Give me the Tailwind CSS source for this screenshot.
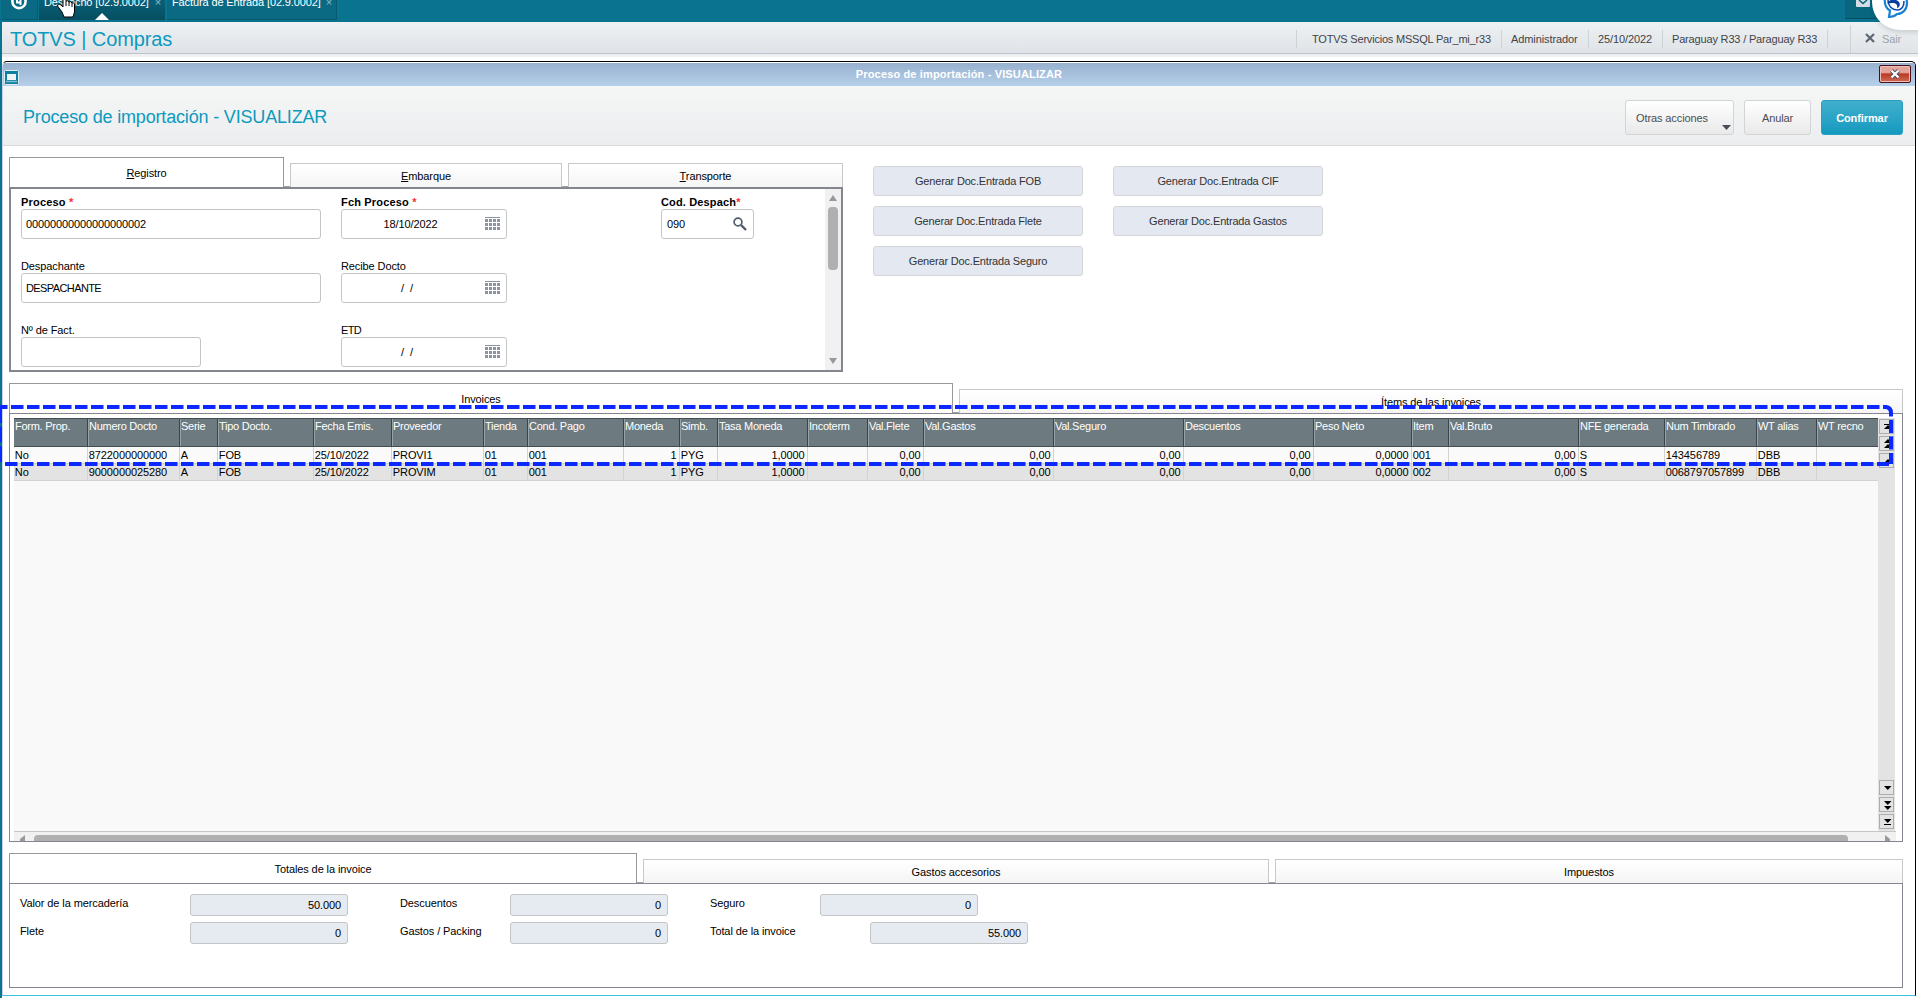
<!DOCTYPE html>
<html lang="es">
  <head>
    <meta charset="UTF-8" />
    <meta name="viewport" content="width=device-width, initial-scale=1.0" />
    <title>TOTVS | Compras</title>
    <script src="https://cdn.jsdelivr.net/npm/@tailwindcss/browser@4"></script>
  </head>

  <body
    class="relative w-[1918px] h-[998px] overflow-hidden bg-white text-black text-[11px] leading-[15px] tracking-[-0.1px] font-['Liberation_Sans',Arial,sans-serif]"
  >
    <!-- Top bar with open routines -->
    <div class="h-[22px] bg-[#0a7390] flex items-start overflow-hidden">
      <div
        class="ml-px w-[37px] h-5 bg-[#0a6a84] border-b border-r border-[#075a70] flex justify-center"
      >
        <svg class="-mt-[7px]" width="18" height="18" viewBox="0 0 18 18" fill="none">
          <circle cx="9" cy="8.500" r="6.600" stroke="#fff" stroke-width="2.600" />
          <path d="M7 4v5.500h4.500M10.500 7v5" stroke="#fff" stroke-width="2" />
        </svg>
      </div>
      <div
        class="relative ml-px w-[126px] h-5 bg-linear-to-b from-[#086078] to-[#074e60] text-white pl-[5px]"
      >
        <div class="-mt-[5px] flex tracking-[-0.15px]">
          <span>Despacho [02.9.0002]</span>
          <span class="ml-[6px] text-[#8fc0cd]">×</span>
        </div>
        <svg class="absolute left-[56px] bottom-0" width="14" height="7">
          <path d="M0 7L7 0l7 7z" fill="#fff" />
        </svg>
      </div>
      <div
        class="ml-0.5 w-[170px] h-5 bg-[#0a6a84] border-b border-r border-[#075a70] text-white pl-[5px]"
      >
        <div class="-mt-[5px] flex tracking-[-0.12px]">
          <span>Factura de Entrada [02.9.0002]</span>
          <span class="ml-[5px] text-[#8fc0cd]">×</span>
        </div>
      </div>
      <div
        class="ml-auto w-[73px] h-[19px] bg-[#08677f] border-b border-[#064e62] pl-[11px]"
      >
        <svg width="14" height="8" viewBox="0 0 14 8">
          <path d="M0 0h14v6q0 1-1 1H1q-1 0-1-1z" fill="#d5dde4" />
          <path d="M3 0l4 3.500L11 0" fill="none" stroke="#07617a" stroke-width="1.500" />
        </svg>
      </div>
    </div>

    <div class="h-[976px] border-l-2 border-[#0a7390] flex flex-col">
      <!-- Application header -->
      <header
        class="h-[32px] shrink-0 border-b border-[#bcc4cb] bg-linear-to-b from-[#eff1f3] to-[#dfe3e7] flex items-center pl-2 text-[#3f4448]"
      >
        <h1
          class="text-[20px] leading-[24px] text-[#0c9abe] pt-[3px]"
        >
          TOTVS | Compras
        </h1>
        <div class="ml-auto h-[31px] flex items-center whitespace-nowrap pt-[3px]">
          <span
            class="w-[205px] h-[18px] leading-[18px] border-l border-[#cdd2d5] pl-[15px] tracking-[-0.2px]"
            >TOTVS Servicios MSSQL Par_mi_r33</span
          >
          <span
            class="w-[87px] h-[18px] leading-[18px] border-l border-[#cdd2d5] pl-[9px]"
            >Administrador</span
          >
          <span
            class="w-[74px] h-[18px] leading-[18px] border-l border-[#cdd2d5] pl-[9px]"
            >25/10/2022</span
          >
          <span
            class="w-[165px] h-[18px] leading-[18px] border-l border-[#cdd2d5] pl-[9px] tracking-[-0.17px]"
            >Paraguay R33 / Paraguay R33</span
          >
          <span class="w-[23px] h-[18px] border-l border-[#cdd2d5]"></span>
          <span
            class="w-[68px] h-[28px] border-l border-[#cdd2d5] flex items-center pl-[14px] text-[#9aa2a8]"
          >
            <svg width="10" height="10" viewBox="0 0 10 10" class="mr-[7px] -mt-0.5">
              <path d="M1 1l8 8M9 1L1 9" stroke="#5b6774" stroke-width="2.200" />
            </svg>
            Sair
          </span>
        </div>
      </header>
      <div class="h-[3px] shrink-0 bg-[#eef0f1]"></div>

      <!-- Dialog window -->
      <div
        class="mt-1 w-[1914px] h-[935px] shrink-0 border-t border-r border-b border-l rounded-t-[5px] border-t-black border-r-black border-b-[#3cc3d8] border-l-[#c8d2e6] overflow-hidden bg-white"
      >
        <div
          class="relative mt-px h-[23px] bg-linear-to-b from-[#98b1cf] to-[#b6d0ea] flex justify-center"
        >
          <span
            class="font-bold text-white leading-[22px] tracking-[0.15px]"
            >Proceso de importación - VISUALIZAR</span
          >
          <svg class="absolute left-px top-[7px]" width="15" height="15" viewBox="0 0 15 15">
            <rect x=".5" y=".5" width="14" height="14" rx="1" fill="#0d7fa3" stroke="#e4eef6" />
            <path d="M3 4h9v6H3z" fill="#eef3f6" />
            <path d="M2 11.500h11" stroke="#7fc0d3" stroke-width="1.500" />
          </svg>
          <div
            class="absolute right-[4px] top-[2px] w-8 h-[18px] rounded-[2px] border border-[#4a1018] bg-linear-to-b from-[#e3a49c] from-40% via-[#b9391f] via-50% to-[#cf6a55] shadow-[inset_0_0_0_1px_#ecc0b8] flex items-center justify-center"
          >
            <svg width="12" height="10" viewBox="0 0 12 10">
              <path d="M2.500 1.500l7 7M9.500 1.500l-7 7" stroke="#4d4f5e" stroke-width="4" />
              <path d="M2.500 1.500l7 7M9.500 1.500l-7 7" stroke="#fff" stroke-width="2.200" />
            </svg>
          </div>
        </div>

        <div
          class="h-[60px] border-b border-[#d8dadc] bg-linear-to-b from-[#f5f7f6] to-[#ecedef] flex items-center pl-[20px] pr-[12px] text-[#4a4d52]"
        >
          <h2
            class="text-[18px] leading-[22px] tracking-[-0.17px] text-[#0c9abe] pt-[3px]"
          >
            Proceso de importación - VISUALIZAR
          </h2>
          <div class="ml-auto flex items-center gap-[10px] pt-[3px]">
            <button
              class="relative w-[109px] h-[35px] rounded-[3px] border border-[#d3d4d6] bg-linear-to-b from-white to-[#e9e9ea] text-left pl-[10px] leading-[35px]"
            >
              Otras acciones
              <svg class="absolute right-[2px] bottom-[4px]" width="9" height="5">
                <path d="M0 0h9L4.500 5z" fill="#4a4d55" />
              </svg>
            </button>
            <button
              class="w-[67px] h-[35px] rounded-[3px] border border-[#d3d4d6] bg-linear-to-b from-white to-[#e9e9ea] leading-[35px]"
            >
              Anular
            </button>
            <button
              class="w-[82px] h-[35px] rounded-[3px] border border-[#2a9fc0] bg-linear-to-b from-[#3fafcd] to-[#0f9abf] text-white font-bold leading-[35px]"
            >
              Confirmar
            </button>
          </div>
        </div>

        <main class="pl-1.5 pt-[11px] w-[1900px]">
          <div class="flex">
            <!-- Process form -->
            <section class="w-[834px]">
              <div
                class="h-[30px] flex items-end gap-[6px] border-b border-[#a0a2a8]"
              >
                <div
                  class="w-[275px] h-[30px] -mb-px border border-b-0 border-[#989898] bg-white text-center leading-[30px]"
                >
                  <u>R</u>egistro
                </div>
                <div
                  class="w-[272px] h-[24px] -mb-px border border-b-0 border-[#c8c8c8] bg-linear-to-b from-white to-[#f5f5f5] text-center leading-[25px]"
                >
                  <u>E</u>mbarque
                </div>
                <div
                  class="w-[275px] h-[24px] -mb-px border border-b-0 border-[#c8c8c8] bg-linear-to-b from-white to-[#f5f5f5] text-center leading-[25px]"
                >
                  <u>T</u>ransporte
                </div>
              </div>
              <div class="h-[185px] border-2 border-[#83858f] flex">
                <div
                  class="grow grid grid-cols-[320px_320px_1fr] auto-rows-[64px] pl-[10px] pt-[5px]"
                >
                  <div>
                    <div class="font-bold leading-[17px] -mb-0.5 tracking-[0.18px]">
                      Proceso <span class="text-red-500">*</span>
                    </div>
                    <div
                      class="w-[300px] h-[30px] rounded-[3px] border border-[#c3c4c6] px-1 leading-[28px] tracking-[-0.12px]"
                    >
                      00000000000000000002
                    </div>
                  </div>
                  <div>
                    <div class="font-bold leading-[17px] -mb-0.5 tracking-[0.18px]">
                      Fch Proceso <span class="text-red-500">*</span>
                    </div>
                    <div
                      class="w-[166px] h-[30px] rounded-[3px] border border-[#c3c4c6] flex items-center pr-[6px]"
                    >
                      <span class="w-[137px] text-center">18/10/2022</span>
                      <svg class="ml-auto" width="15" height="14" fill="#8e93a3">
                        <path
                          d="M0 0h15v1H0zM0 2h3v3H0zM4 2h3v3H4zM8 2h3v3H8zM12 2h3v3h-3zM0 6h3v3H0zM4 6h3v3H4zM8 6h3v3H8zM12 6h3v3h-3zM0 10h3v3H0zM4 10h3v3H4zM8 10h3v3H8zM12 10h3v3h-3z"
                        />
                      </svg>
                    </div>
                  </div>
                  <div>
                    <div class="font-bold leading-[17px] -mb-0.5 tracking-[0.15px]">
                      Cod. Despach<span class="text-red-500">*</span>
                    </div>
                    <div
                      class="w-[93px] h-[30px] rounded-[3px] border border-[#c3c4c6] flex items-center pl-[5px] pr-[6px]"
                    >
                      090
                      <svg class="ml-auto -mt-px" width="14" height="14" viewBox="0 0 14 14" fill="none">
                        <circle cx="5" cy="5" r="3.900" stroke="#515c6e" stroke-width="1.700" />
                        <path d="M8 8l5 5" stroke="#515c6e" stroke-width="2.400" />
                      </svg>
                    </div>
                  </div>
                  <div>
                    <div class="leading-[17px] -mb-0.5">Despachante</div>
                    <div
                      class="w-[300px] h-[30px] rounded-[3px] border border-[#c3c4c6] px-1 leading-[28px] tracking-[-0.6px]"
                    >
                      DESPACHANTE
                    </div>
                  </div>
                  <div>
                    <div class="leading-[17px] -mb-0.5">Recibe Docto</div>
                    <div
                      class="w-[166px] h-[30px] rounded-[3px] border border-[#c3c4c6] flex items-center pr-[6px]"
                    >
                      <span class="w-[130px] text-center whitespace-pre">/  /</span>
                      <svg class="ml-auto" width="15" height="14" fill="#8e93a3">
                        <path
                          d="M0 0h15v1H0zM0 2h3v3H0zM4 2h3v3H4zM8 2h3v3H8zM12 2h3v3h-3zM0 6h3v3H0zM4 6h3v3H4zM8 6h3v3H8zM12 6h3v3h-3zM0 10h3v3H0zM4 10h3v3H4zM8 10h3v3H8zM12 10h3v3h-3z"
                        />
                      </svg>
                    </div>
                  </div>
                  <div></div>
                  <div>
                    <div class="leading-[17px] -mb-0.5">Nº de Fact.</div>
                    <div
                      class="w-[180px] h-[30px] rounded-[3px] border border-[#c3c4c6]"
                    ></div>
                  </div>
                  <div>
                    <div class="leading-[17px] -mb-0.5 tracking-[-0.7px]">ETD</div>
                    <div
                      class="w-[166px] h-[30px] rounded-[3px] border border-[#c3c4c6] flex items-center pr-[6px]"
                    >
                      <span class="w-[130px] text-center whitespace-pre">/  /</span>
                      <svg class="ml-auto" width="15" height="14" fill="#8e93a3">
                        <path
                          d="M0 0h15v1H0zM0 2h3v3H0zM4 2h3v3H4zM8 2h3v3H8zM12 2h3v3h-3zM0 6h3v3H0zM4 6h3v3H4zM8 6h3v3H8zM12 6h3v3h-3zM0 10h3v3H0zM4 10h3v3H4zM8 10h3v3H8zM12 10h3v3h-3z"
                        />
                      </svg>
                    </div>
                  </div>
                </div>
                <div
                  class="w-4 bg-[#f1f1f1] flex flex-col items-center pt-[6px] pb-[6px]"
                >
                  <svg width="8" height="6"><path d="M4 0l4 6H0z" fill="#989898" /></svg>
                  <div class="mt-[6px] w-[10px] h-[63px] rounded-[4px] bg-[#b0b0b0]"></div>
                  <svg class="mt-auto" width="8" height="6"><path d="M0 0h8L4 6z" fill="#989898" /></svg>
                </div>
              </div>
            </section>

            <!-- Document generation -->
            <section
              class="ml-[30px] mt-[9px] grid grid-cols-[210px_210px] auto-rows-[30px] gap-x-[30px] gap-y-[10px] content-start text-[#333] tracking-[-0.18px]"
            >
              <button class="rounded-[3px] border border-[#d4d5d8] bg-[#e4e8f1]">
                Generar Doc.Entrada FOB
              </button>
              <button class="rounded-[3px] border border-[#d4d5d8] bg-[#e4e8f1]">
                Generar Doc.Entrada CIF
              </button>
              <button class="rounded-[3px] border border-[#d4d5d8] bg-[#e4e8f1]">
                Generar Doc.Entrada Flete
              </button>
              <button class="rounded-[3px] border border-[#d4d5d8] bg-[#e4e8f1]">
                Generar Doc.Entrada Gastos
              </button>
              <button class="rounded-[3px] border border-[#d4d5d8] bg-[#e4e8f1]">
                Generar Doc.Entrada Seguro
              </button>
            </section>
          </div>

          <!-- Invoices -->
          <section class="mt-[11px] w-[1894px]">
            <div
              class="h-[30px] flex items-end gap-[6px] border-b border-[#a0a2a8]"
            >
              <div
                class="w-[944px] h-[30px] -mb-px border border-b-0 border-[#989898] bg-white text-center leading-[31px]"
              >
                Invoices
              </div>
              <div
                class="w-[944px] h-[24px] -mb-px border border-b-0 border-[#c8c8c8] bg-linear-to-b from-white to-[#f5f5f5] text-center leading-[25px]"
              >
                Ítems de las invoices
              </div>
            </div>
            <div class="h-[429px] border border-[#83858f] pl-1 pt-1">
              <div class="w-[1882px] h-[413px] flex">
                <div id="invoice-grid" class="w-[1864px] bg-[#f9f9f9]"></div>
                <div
                  class="w-[17px] bg-[#e3e3e3] flex flex-col items-center gap-0.5 pt-px pb-0.5 pr-px"
                >
                  <svg class="border border-[#adadad]" width="15" height="15" viewBox="0 0 13 13">
                    <path d="M4 4h8v1H4zM8 5l4 4H4z" />
                  </svg>
                  <svg class="border border-[#adadad]" width="15" height="15" viewBox="0 0 13 13">
                    <path d="M8 2l4 4H4zM8 7l4 4H4z" />
                  </svg>
                  <svg class="border border-[#adadad]" width="15" height="15" viewBox="0 0 13 13">
                    <path d="M8 5l4 4H4z" />
                  </svg>
                  <svg class="mt-auto border border-[#adadad]" width="15" height="15" viewBox="0 0 13 13">
                    <path d="M4 5h7.500L7.750 9z" />
                  </svg>
                  <svg class="border border-[#adadad]" width="15" height="15" viewBox="0 0 13 13">
                    <path d="M4 3h7.500L7.750 7zM4 8h7.500L7.750 12z" />
                  </svg>
                  <svg class="border border-[#adadad]" width="15" height="15" viewBox="0 0 13 13">
                    <path d="M4 4h7.500L7.750 8zM4 9h7v1H4z" />
                  </svg>
                </div>
              </div>
              <div
                class="w-[1882px] h-[10px] border-t border-[#c6c6c6] bg-[#f1f1f1] flex items-end overflow-hidden"
              >
                <svg class="ml-[6px]" width="5" height="6"><path d="M5 0v6H0V4z" fill="#989898" /></svg>
                <div class="ml-[9px] w-[1814px] h-[6px] rounded-t-[4px] bg-[#b0b0b0]"></div>
                <svg class="ml-[37px]" width="5" height="6"><path d="M0 0v6h5V4z" fill="#989898" /></svg>
              </div>
            </div>
          </section>

          <!-- Totals -->
          <section class="mt-[11px] w-[1894px]">
            <div
              class="h-[30px] flex items-end gap-[6px] border-b border-[#a0a2a8]"
            >
              <div
                class="w-[628px] h-[30px] -mb-px border border-b-0 border-[#989898] bg-white text-center leading-[31px]"
              >
                Totales de la invoice
              </div>
              <div
                class="w-[626px] h-[24px] -mb-px border border-b-0 border-[#c8c8c8] bg-linear-to-b from-white to-[#f5f5f5] text-center leading-[25px]"
              >
                Gastos accesorios
              </div>
              <div
                class="w-[628px] h-[24px] -mb-px border border-b-0 border-[#c8c8c8] bg-linear-to-b from-white to-[#f5f5f5] text-center leading-[25px]"
              >
                Impuestos
              </div>
            </div>
            <div class="h-[105px] border border-[#83858f] pl-[10px] pt-[10px]">
              <div class="flex h-[28px] leading-[19px]">
                <span class="w-[170px]">Valor de la mercadería</span>
                <div class="w-[158px] h-[22px] leading-[21px] rounded-[3px] border border-[#c3c4c6] bg-[#e6eaf1] pr-[6px] text-right">50.000</div>
                <span class="ml-[52px] w-[110px]">Descuentos</span>
                <div class="w-[158px] h-[22px] leading-[21px] rounded-[3px] border border-[#c3c4c6] bg-[#e6eaf1] pr-[6px] text-right">0</div>
                <span class="ml-[42px] w-[110px]">Seguro</span>
                <div class="w-[158px] h-[22px] leading-[21px] rounded-[3px] border border-[#c3c4c6] bg-[#e6eaf1] pr-[6px] text-right">0</div>
              </div>
              <div class="flex h-[28px] leading-[19px]">
                <span class="w-[170px]">Flete</span>
                <div class="w-[158px] h-[22px] leading-[21px] rounded-[3px] border border-[#c3c4c6] bg-[#e6eaf1] pr-[6px] text-right">0</div>
                <span class="ml-[52px] w-[110px]">Gastos / Packing</span>
                <div class="w-[158px] h-[22px] leading-[21px] rounded-[3px] border border-[#c3c4c6] bg-[#e6eaf1] pr-[6px] text-right">0</div>
                <span class="ml-[42px] w-[160px]">Total de la invoice</span>
                <div class="w-[158px] h-[22px] leading-[21px] rounded-[3px] border border-[#c3c4c6] bg-[#e6eaf1] pr-[6px] text-right">55.000</div>
              </div>
            </div>
          </section>
        </main>
      </div>
    </div>

    <!-- Highlight around the first invoice -->
    <svg
      class="absolute left-0 top-[400px] pointer-events-none"
      width="1918"
      height="72"
      fill="none"
      stroke="#0a28ff"
      stroke-width="4"
    >
      <path d="M-5 7h1892" stroke-dasharray="12.500 3.500" />
      <path d="M5 64h1884" stroke-dasharray="12.500 3.500" />
      <path d="M0 7v57" stroke-dasharray="16 3.500" />
      <path d="M1885 7q6 0 6 6v51" stroke-dasharray="13 3.500" />
    </svg>

    <!-- Chat launcher -->
    <div
      class="absolute left-[1872px] -top-[26px] w-[56px] h-[56px] rounded-l-full bg-white shadow-[0_2px_5px_rgba(0,0,0,0.15)]"
    >
      <svg class="absolute left-[11px] top-[22px]" width="26" height="24" viewBox="0 0 26 24" fill="none">
        <path d="M2 2c-1 7 2 11 5 12.500L6 21c3 0 6-1 8-3 6 0 10-5 10-11 0-3-1-5-2-6" stroke="#1583cf" stroke-width="2.200" />
        <path d="M5 4c0 6 4 10 9 10s7-4 7-9" stroke="#0d4fae" stroke-width="1.600" />
        <path d="M4 7c3-4 8-5 12-1 2 3 0 6-2 6 1-3-1-5-4-5-3 0-5 1-6 0z" fill="#0b3f9f" />
      </svg>
    </div>

    <!-- Mouse pointer -->
    <svg class="absolute left-[56px] top-0" width="20" height="19" viewBox="0 0 20 19">
      <path
        d="M7 -4V7L5 5Q2 3 1.500 6L6 12l2 5h9l1.500-5V4q-1-2-2.500-1Q15 1 13 2 12 0 10 1V-4z"
        fill="#fff"
        stroke="#000"
      />
      <path d="M10 1v5M13 2v4M16 3v4" stroke="#000" />
    </svg>

    <script>
      // name, width, right aligned
      const columns = [
        ["Form. Prop.", 74],
        ["Numero Docto", 92],
        ["Serie", 38],
        ["Tipo Docto.", 96],
        ["Fecha Emis.", 78],
        ["Proveedor", 92],
        ["Tienda", 44],
        ["Cond. Pago", 96],
        ["Moneda", 56, true],
        ["Simb.", 38],
        ["Tasa Moneda", 90, true],
        ["Incoterm", 60],
        ["Val.Flete", 56, true],
        ["Val.Gastos", 130, true],
        ["Val.Seguro", 130, true],
        ["Descuentos", 130, true],
        ["Peso Neto", 98, true],
        ["Item", 37],
        ["Val.Bruto", 130, true],
        ["NFE generada", 86],
        ["Num Timbrado", 92],
        ["WT alias", 60],
        ["WT recno", 61],
      ];

      const invoices = [
        ["No", "8722000000000", "A", "FOB", "25/10/2022", "PROVI1", "01", "001", "1", "PYG", "1,0000", "", "0,00", "0,00", "0,00", "0,00", "0,0000", "001", "0,00", "S", "143456789", "DBB", ""],
        ["No", "9000000025280", "A", "FOB", "25/10/2022", "PROVIM", "01", "001", "1", "PYG", "1,0000", "", "0,00", "0,00", "0,00", "0,00", "0,0000", "002", "0,00", "S", "0068797057899", "DBB", ""],
      ];

      const grid = document.getElementById("invoice-grid");

      function addRow(rowClass, cellClass, cells, isHeader) {
        const row = document.createElement("div");
        row.className = rowClass;
        cells.forEach((text, i) => {
          const cell = document.createElement("div");
          cell.className = cellClass;
          cell.style.width = columns[i][1] + "px";
          if (!isHeader && columns[i][2]) {
            cell.classList.add("text-right");
          }
          cell.textContent = text;
          row.appendChild(cell);
        });
        grid.appendChild(row);
      }

      addRow(
        "flex h-[29px] bg-[#6d7b80] border-t border-b border-[#454d50] text-white",
        "shrink-0 whitespace-nowrap border-r border-r-[#3c4447] border-l border-l-[#98a3a6] first:border-l-0 first:pl-px last:border-r-0 leading-[14px] tracking-[-0.26px]",
        columns.map((c) => c[0]),
        true
      );
      invoices.forEach((invoice, i) => {
        addRow(
          i % 2
            ? "flex h-[17px] bg-[#e3e3e3] border-b border-[#d2d2d2]"
            : "flex h-[17px] bg-[#fafafa] border-b border-[#d2d2d2]",
          "shrink-0 whitespace-nowrap border-r border-[#d2d2d2] last:border-r-0 pl-[0.8px] pr-[2.5px] leading-[16px] tracking-[-0.1px]",
          invoice,
          false
        );
      });
    </script>
  </body>
</html>
